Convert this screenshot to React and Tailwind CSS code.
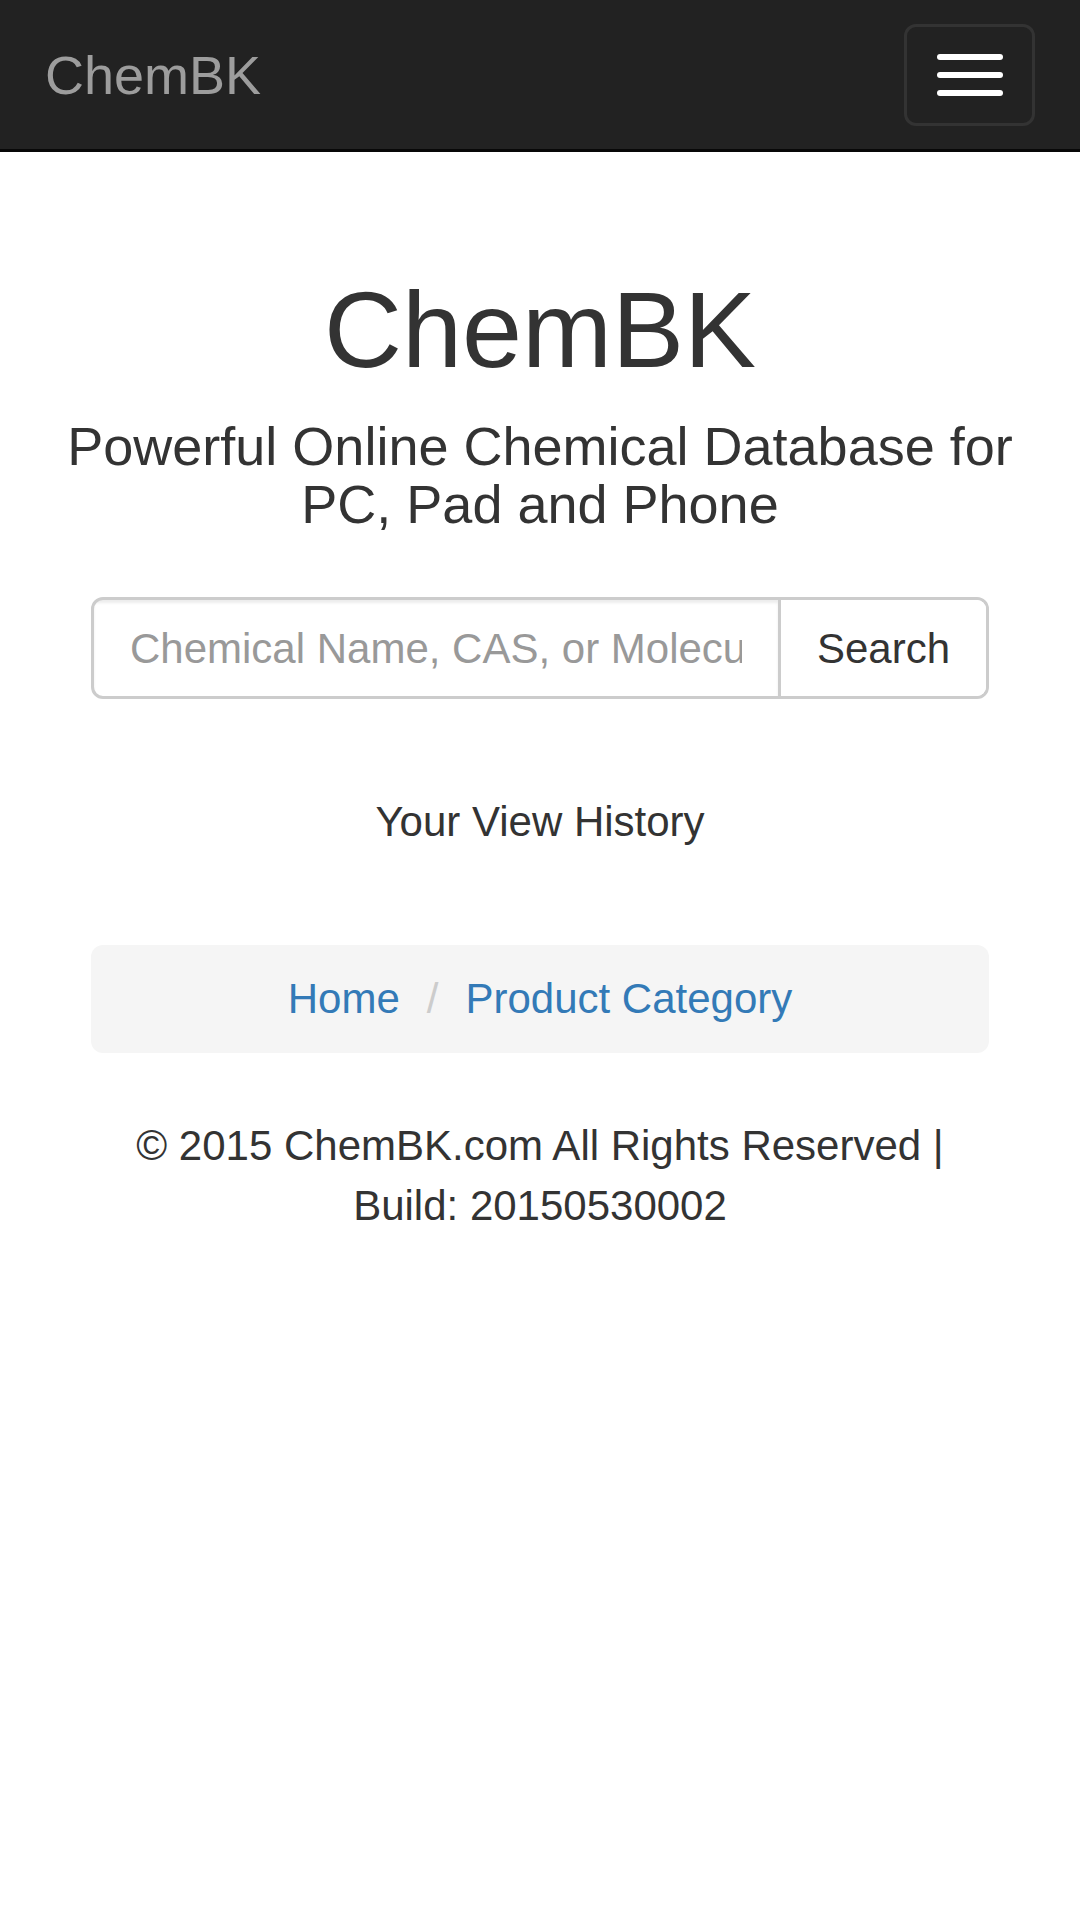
const App = () => {
  return (
    <div className="min-h-screen bg-white text-[#333] font-['Liberation_Sans',Arial,sans-serif]">
      <nav className="h-[152px] bg-[#222] border-b-[3px] border-[#080808] flex items-center justify-between pl-[45px] pr-[45px]">
        <a className="text-[54px] leading-[60px] text-[#9d9d9d]">ChemBK</a>
        <button className="w-[131px] h-[102px] rounded-[12px] border-[3px] border-[#333] flex flex-col items-center justify-center gap-[12px]">
          <span className="block w-[66px] h-[6px] rounded-[3px] bg-white" />
          <span className="block w-[66px] h-[6px] rounded-[3px] bg-white" />
          <span className="block w-[66px] h-[6px] rounded-[3px] bg-white" />
        </button>
      </nav>

      <div className="px-[45px] text-center">
        <h1 className="mt-[118px] text-[108px] leading-[119px]">ChemBK</h1>
        <h2 className="mt-[28px] text-[54px] leading-[58px]">
          Powerful Online Chemical Database for PC, Pad and Phone
        </h2>

        <div className="mx-auto mt-[64px] w-[898px] h-[102px] flex border-[3px] border-[#ccc] rounded-[12px] overflow-hidden">
          <input
            type="text"
            placeholder="Chemical Name, CAS, or Molecular Formula"
            className="flex-1 min-w-0 px-[36px] text-[42px] text-[#555] placeholder:text-[#999] outline-none shadow-[inset_0_3px_3px_rgba(0,0,0,0.075)]"
          />
          <button className="px-[36px] border-l-[3px] border-[#ccc] bg-white text-[42px] text-[#333]">
            Search
          </button>
        </div>

        <p className="mt-[93px] text-[42px] leading-[60px]">Your View History</p>

        <div className="mx-auto mt-[93px] w-[898px] bg-[#f5f5f5] rounded-[12px] py-[24px] px-[45px] text-[42px] leading-[60px]">
          <a className="text-[#337ab7]">Home</a>
          <span className="px-[27px] text-[#ccc]">/</span>
          <a className="text-[#337ab7]">Product Category</a>
        </div>

        <footer className="mx-auto mt-[63px] w-[898px] text-[42px] leading-[60px]">
          © 2015 ChemBK.com All Rights Reserved | Build: 20150530002
        </footer>
      </div>
    </div>
  );
};

export default App;
